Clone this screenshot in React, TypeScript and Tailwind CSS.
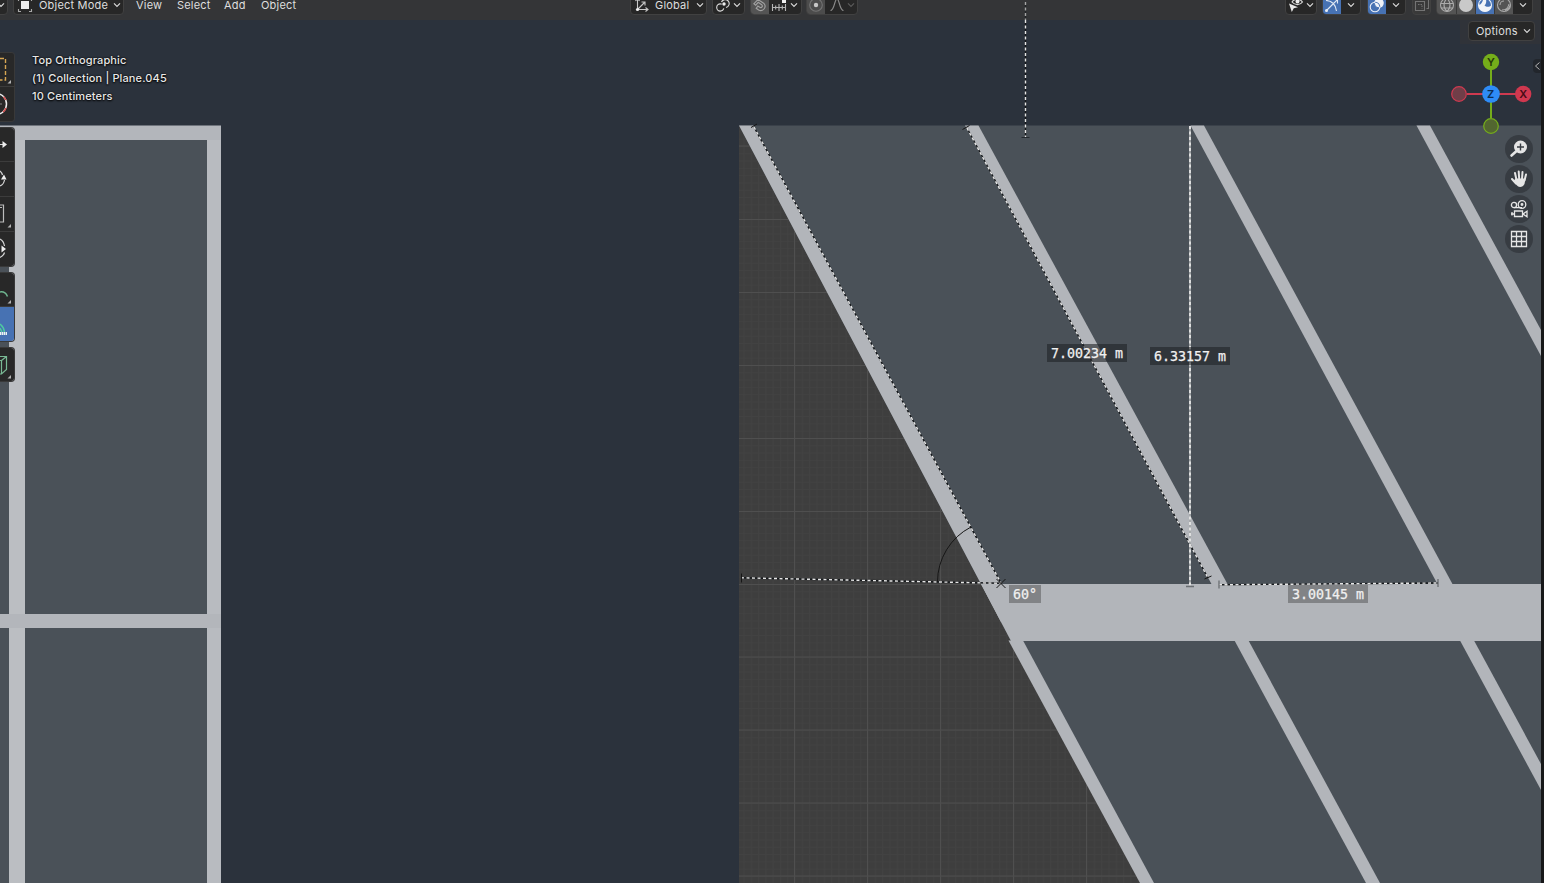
import type { ReactNode } from "react";

const UI = "font-['Inter',sans-serif] text-[11px] tracking-[0.2px] leading-[11px] whitespace-nowrap";

function Chevron({ dim = false }: { dim?: boolean }) {
  return (
    <svg width="8" height="6" viewBox="0 0 8 6" className="shrink-0" fill="none" stroke={dim ? "#5a5a5a" : "#d8d8d8"} strokeWidth="1.2">
      <path d="M1 1.3 4 4.3 7 1.3" />
    </svg>
  );
}

function Button({ className, children }: { className: string; children?: ReactNode }) {
  return (
    <div className={`flex h-5 shrink-0 items-center overflow-hidden rounded-[4px] border border-[#414141] bg-[#272727] ${className}`}>
      {children}
    </div>
  );
}

function Icon({ children, className = "" }: { children: ReactNode; className?: string }) {
  return (
    <svg width="16" height="16" viewBox="0 0 16 16" className={`shrink-0 ${className}`} fill="none" stroke="#dcdcdc" strokeWidth="1.1">
      {children}
    </svg>
  );
}

function Header() {
  return (
    <header className={`flow-root h-5 w-[1541px] bg-[#343537] text-[#dedede] ${UI}`}>
      <div className="-mt-[5px] flex h-5 items-center">
        <Button className="-ml-3 w-[20px] justify-end pr-[2px]"><Chevron /></Button>
        <Button className="ml-[5px] w-[111px] pl-[3px]">
          <Icon>
            <rect x="4" y="4" width="8" height="8" fill="#ececec" stroke="none" />
            <path d="M1.5 4V1.5H4M12 1.5h2.5V4M14.500 12v2.500H12M4 14.500H1.500V12" stroke="#a8a8a8" />
          </Icon>
          <span className="ml-[6px] w-[74px] pt-px">Object Mode</span>
          <Chevron />
        </Button>
        <nav className="flex w-[506px] pl-3 pt-px">
          <span className="w-[41px]">View</span>
          <span className="w-[47px]">Select</span>
          <span className="w-[37px]">Add</span>
          <span>Object</span>
        </nav>
        <Button className="w-[77px] pl-[3px]">
          <Icon>
            <path d="M3.500 2v10.500h10M1.500 4l2-2.500 2 2.500M11.500 10.500l2.500 2-2.500 2M3.500 12.500l7-7M7.500 5h3.500v3.500" stroke="#c8c8c8" />
            <circle cx="3.500" cy="12.500" r="1.600" fill="#eee" stroke="none" />
          </Icon>
          <span className="ml-[5px] w-[41px] pt-px">Global</span>
          <Chevron />
        </Button>
        <Button className="ml-[5px] w-[33px] pl-[2px]">
          <Icon className="mr-[2px]">
            <circle cx="5.300" cy="10.500" r="3.600" strokeDasharray="17 5.600" strokeDashoffset="-1" />
            <path d="M6.500 5A4 4 0 1 1 11 10.500" />
            <circle cx="9" cy="7" r="1.700" fill="#eee" stroke="none" />
          </Icon>
          <Chevron />
        </Button>
        <Button className="ml-[5px] w-[52px]">
          <div className="flex h-full w-[18px] items-center justify-center bg-[#545454]">
            <Icon>
              <path d="M1.800 6.800 6 2.500 12 6.500A4.300 4.300 0 0 1 6.600 13L4.200 11.300 5.900 9l2.300 1.500A1.600 1.600 0 0 0 10 8L6.200 5.300 3.700 8.200z" stroke="#a2a2a2" />
            </Icon>
          </div>
          <Icon className="ml-[2px]">
            <path d="M1 10.500h14M1.500 7v7M4.700 8.500v4M8 7v7M11.300 8.500v4M14.500 7v7" stroke="#b6b6b6" />
            <rect x="11" y="1" width="4" height="5" fill="#f1f1f1" stroke="none" />
          </Icon>
          <span className="ml-[3px] flex"><Chevron /></span>
        </Button>
        <Button className="ml-[4px] w-[52px]">
          <div className="flex h-full w-[18px] items-center justify-center bg-[#4c4c4c]">
            <Icon>
              <circle cx="8" cy="8" r="6.300" stroke="#747474" />
              <circle cx="8" cy="8" r="2.200" fill="#c7c7c7" stroke="none" />
            </Icon>
          </div>
          <Icon className="ml-[4px]">
            <path d="M1.500 13.500c4 0 4-11.500 6.500-11.500s2.500 11.500 6.500 11.500" stroke="#8c8c8c" />
          </Icon>
          <span className="ml-[2px] flex"><Chevron dim /></span>
        </Button>

        <Button className="ml-[427px] w-[32px] pl-[2px]">
          <Icon className="mr-[2px]">
            <path d="M1 6.500l9 3.800-4.200 1-2 3.700z" fill="#e8e8e8" stroke="none" />
            <path d="M4 5C6 1.500 12 1.500 14.500 5 12 8.500 7 8.500 4 5z" />
            <circle cx="9.500" cy="4.500" r="2" fill="#eee" stroke="none" />
          </Icon>
          <Chevron />
        </Button>
        <Button className="ml-[5px] w-[39px]">
          <div className="flex h-full w-[18px] items-center justify-center bg-[#4772b3]">
            <Icon>
              <path d="M2 3.500C8 3.500 12 8 12.500 14M2 14 13 3M9.500 2.500h4v4M8 8 2 14" stroke="#e0e8f3" />
              <circle cx="2.500" cy="13.500" r="1.500" fill="#e8edf5" stroke="none" />
            </Icon>
          </div>
          <span className="ml-[6px] flex"><Chevron /></span>
        </Button>
        <Button className="ml-[6px] w-[39px]">
          <div className="flex h-full w-[18px] items-center justify-center bg-[#4772b3]">
            <Icon>
              <circle cx="10" cy="6" r="4.800" fill="#f0f3f8" stroke="none" />
              <circle cx="6" cy="10" r="4.800" stroke="#e9eef6" />
              <path d="M5.400 6.200A4.800 4.800 0 0 0 10 10.800M6.200 5.200A4.800 4.800 0 0 1 10.800 9.800" stroke="#4772b3" />
            </Icon>
          </div>
          <span className="ml-[6px] flex"><Chevron /></span>
        </Button>
        <div className="ml-[6px] flex h-5 w-[19px] items-center justify-center rounded-[4px] border border-[#414141] bg-[#393939]">
          <Icon>
            <path d="M1.500 4.500h9v9h-9zM4.500 1.500h10v10h-2" stroke="#747474" />
            <path d="M4 7.500h4v4" stroke="#747474" strokeDasharray="1.500 1" />
          </Icon>
        </div>
        <Button className="ml-[5px] w-[97px]">
          <div className="flex h-full w-[19px] items-center justify-center bg-[#545454]">
            <Icon>
              <circle cx="8" cy="8" r="6.500" stroke="#aaa" />
              <path d="M1.500 6.500h13M2.500 11h11M8 1.500C4 5 4 11 8 14.500M8 1.500c4 3.500 4 9.500 0 13" stroke="#aaa" />
            </Icon>
          </div>
          <div className="flex h-full w-[19px] items-center justify-center border-l border-[#393939] bg-[#545454]">
            <Icon><circle cx="8" cy="8" r="7" fill="#c9c9c9" stroke="none" /></Icon>
          </div>
          <div className="flex h-full w-[19px] items-center justify-center border-l border-[#393939] bg-[#4772b3]">
            <Icon>
              <circle cx="8" cy="8" r="6.500" stroke="#edf1f7" />
              <path d="M8.500 1.500C10 4 9 7 7.500 8.500c2 2 5 1.500 7 0A6.500 6.500 0 0 1 2 10.500C1 7 3 3 8.500 1.500z" fill="#f1f4f8" stroke="none" />
              <path d="M2.500 6C3 4.500 4.500 3 6 2.700 5.500 5 4.500 6.500 2.500 8z" fill="#4772b3" stroke="none" />
            </Icon>
          </div>
          <div className="flex h-full w-[19px] items-center justify-center border-l border-[#393939] bg-[#545454]">
            <Icon>
              <circle cx="8" cy="8" r="6.500" stroke="#ababab" />
              <path d="M4 8a4 4 0 0 1 4-4M6 13c4 0 6.500-3 7-6M9 13.500c3-1 4.500-3 5-5" stroke="#ababab" />
            </Icon>
          </div>
          <span className="ml-[6px] flex"><Chevron /></span>
        </Button>
      </div>
    </header>
  );
}

const majorX = [794.5, 867.5, 940.5, 1013.5, 1086.5];
const majorY = [146, 219.5, 292.500, 365.500, 438.500, 511.500, 584.500, 657, 730, 803, 876];

function DashLine({ x1, y1, x2, y2, soft = false }: { x1: number; y1: number; x2: number; y2: number; soft?: boolean }) {
  return (
    <g strokeWidth={soft ? 1.8 : 1.4}>
      <line x1={x1} y1={y1} x2={x2} y2={y2} stroke={soft ? "#a4a7aa" : "#15181b"} />
      <line x1={x1} y1={y1} x2={x2} y2={y2} stroke="#e6e6e6" strokeDasharray="3 2.500" />
    </g>
  );
}

function Scene() {
  return (
    <svg className="absolute inset-0" width="1544" height="883" viewBox="0 0 1544 883">
      <defs>
        <pattern id="minor" x="794.500" y="146" width="7.300" height="7.300" patternUnits="userSpaceOnUse">
          <path d="M0 .500H7.300M.500 0V7.300" stroke="#424242" strokeWidth="1" fill="none" />
        </pattern>
        <clipPath id="ground"><polygon points="739,125.500 1011,641 1142,883 739,883" /></clipPath>
      </defs>
      <rect width="1544" height="883" fill="#2b323c" />
      <rect x="0" y="125.500" width="221" height="757.500" fill="#b3b6bb" />
      <rect x="9" y="140" width="16" height="743" fill="#bbbec2" />
      <rect x="207" y="140" width="14" height="743" fill="#b8bbc0" />
      <g fill="#4a5158">
        <rect x="0" y="140" width="9" height="474" />
        <rect x="0" y="628" width="9" height="255" />
        <rect x="25" y="140" width="182" height="474" />
        <rect x="25" y="628" width="182" height="255" />
      </g>
      <rect x="0" y="614" width="221" height="14" fill="#b3b6bb" />

      <rect x="739" y="125.500" width="802" height="757.500" fill="#4a5158" />
      <g clipPath="url(#ground)" stroke="#4f4f4f" strokeWidth="1">
        <rect x="739" y="125" width="420" height="758" fill="#3e3e3e" stroke="none" />
        <rect x="739" y="125" width="420" height="758" fill="url(#minor)" stroke="none" />
        {majorX.map((x) => <line key={x} x1={x} x2={x} y1="125" y2="883" />)}
        {majorY.map((y) => <line key={y} y1={y} y2={y} x1="739" x2="1150" />)}
      </g>
      <g fill="#b2b5ba">
        <polygon points="739,125.500 753.500,125.500 1001,584 1001,622 1011,641 981,584" />
        <polygon points="965,125.500 978.500,125.500 1228,585 1212,585" />
        <polygon points="1190.500,125.500 1204,125.500 1453,585 1438,585" />
        <polygon points="1416.500,125.500 1430,125.500 1541,330 1541,356" />
        <polygon points="981,584 1541,584 1541,641 1011,641" />
        <polygon points="1008.500,640.500 1023,640.500 1154,883 1140,883" />
        <polygon points="1234.500,640.500 1248.500,640.500 1380,883 1366,883" />
        <polygon points="1460,640.500 1474,640.500 1541,764 1541,790" />
      </g>

      <DashLine x1={1025.500} y1={20} x2={1025.500} y2={137} />
      <path d="M1021.500 137.500h8" stroke="#24292e" />
      <DashLine x1={754} y1={127} x2={1001} y2={583} />
      <DashLine x1={967} y1={128} x2={1208} y2={578} />
      <DashLine x1={741} y1={577.800} x2={1001} y2={583.300} />
      <DashLine x1={1190} y1={126} x2={1190} y2={586} soft />
      <DashLine x1={1219} y1={584.800} x2={1438} y2={583} />
      <g fill="none" stroke="#161616">
        <path d="M937.500 582A62 62 0 0 1 971 527" />
        <path d="M996.500 579l9 9M996.500 588l9-9M741.500 573.500v9M751 127.500l6-3.500M962.500 129.500l7-4M1204.500 579l7-3" />
      </g>
      <g stroke="#6a6e72" strokeWidth="1.300">
        <path d="M1186 586.500h8M1219 580.500v8M1438 579v8" />
      </g>
      <rect x="1541" width="3" height="883" fill="#171819" />
    </svg>
  );
}

function Measure({ className, children }: { className: string; children: string }) {
  return (
    <div className={`absolute flex h-[18px] items-center whitespace-pre pl-[4px] pt-[2px] font-['DejaVu_Sans_Mono',monospace] text-[13.300px] leading-none text-[#f0f0f0] [-webkit-text-stroke:0.25px_#f0f0f0] ${className}`}>
      {children}
    </div>
  );
}

function Corner() {
  return <path d="M11 28V31.500H7.500z" transform="translate(0 -1)" fill="#b4b4b4" stroke="none" />;
}

function Tool({ active = false, h, children }: { active?: boolean; h: string; children: ReactNode }) {
  return (
    <div className={`w-[14px] border-b border-[#3c3c3c] last:border-b-0 ${h} ${active ? "bg-[#4772b3]" : "bg-[#282828]"}`}>
      <svg width="14" height="34" viewBox="0 0 14 34" fill="none" stroke="#d6d6d6" strokeWidth="1.200">{children}</svg>
    </div>
  );
}

function Toolbar() {
  const group = "w-[15px] overflow-hidden rounded-r-[4px] border-y border-r border-[#393939]";
  return (
    <aside className="absolute left-0 top-[52px] flex flex-col gap-[5px]">
      <div className={`${group} h-[70px]`}>
        <Tool h="h-[34px]">
          <path d="M0 5.500h5.500V27H0" stroke="#d7a653" strokeWidth="1.400" strokeDasharray="4 2" />
          <Corner />
        </Tool>
        <Tool h="h-[34px]">
          <path d="M-4 6.500A10.500 10.500 0 0 1-4 27.500" stroke="#eee" strokeWidth="1.500" />
          <path d="M3.500 9.700A10.500 10.500 0 0 1 6 13M6 21a10 10 0 0 1-3 4" stroke="#d54b4b" strokeWidth="1.500" />
          <path d="M0 17h2" stroke="#888" />
        </Tool>
      </div>
      <div className={`${group} h-[140px]`}>
        <Tool h="h-[34px]"><path d="M0 16.500h4" /><path d="M2.500 13v7L7 16.500z" fill="#eee" stroke="none" /></Tool>
        <Tool h="h-[35px]"><path d="M0 9c1 1 2 2 2.500 4M4.500 18c-.5 3-2 5-4.500 6" /><path d="M1 17.500h5.500L4 12.500z" fill="#eee" stroke="none" /></Tool>
        <Tool h="h-[35px]"><path d="M0 8h3.500v17H0M-2 10.500h4" stroke="#bcbcbc" /><Corner /></Tool>
        <Tool h="h-[34px]"><path d="M0 7c2 1 4 4 4.500 7M4.500 20.500c-.5 2-2.500 4-4.500 5" /><path d="M1.500 13.500v7l4.500-3.500z" fill="#eee" stroke="none" /></Tool>
      </div>
      <div className={`${group} h-[70px]`}>
        <Tool h="h-[34px]"><path d="M0 19q5-1 7.500 4.500" stroke="#6fb58f" strokeWidth="1.500" /><Corner /></Tool>
        <Tool h="h-[35px]" active>
          <path d="M0 17q4 3 4.500 8M0 21l2 4" stroke="#4ec9a0" strokeWidth="1.500" />
          <path d="M0 26.500h7" stroke="#edf4f2" strokeWidth="3" strokeDasharray="1.500 .500" />
        </Tool>
      </div>
      <div className={`${group} h-[35px]`}>
        <Tool h="h-[35px]"><path d="M0 8.500h6.500v13L1.500 26H0M1.500 26V12.500H0M1.500 12.500l5-4" stroke="#79b994" /><Corner /></Tool>
      </div>
    </aside>
  );
}

function AxisGizmo() {
  return (
    <svg className="absolute left-[1449px] top-[52px] font-['Inter',sans-serif]" width="86" height="84" viewBox="0 0 86 84">
      <g strokeWidth="2">
        <path d="M42 10v56" stroke="#75ad1b" />
        <path d="M18 42h56" stroke="#cf3a50" />
        <circle cx="10" cy="42" r="7.300" fill="#703e48" stroke="#cf3a50" strokeWidth="1.200" />
        <circle cx="42" cy="74" r="7.300" fill="#526630" stroke="#75ad1b" strokeWidth="1.200" />
      </g>
      <circle cx="42" cy="10" r="8.200" fill="#75ae1a" />
      <circle cx="74.200" cy="42" r="8.200" fill="#d0384f" />
      <circle cx="42" cy="42" r="8.800" fill="#2e8cf7" />
      <g textAnchor="middle" fontSize="11" fontWeight="600">
        <text x="42" y="14" fill="#263a08">Y</text>
        <text x="74.200" y="46" fill="#450b15">X</text>
        <text x="41.500" y="46" fill="#0c2d55">Z</text>
      </g>
    </svg>
  );
}

function NavButton({ children }: { children: ReactNode }) {
  return (
    <div className="flex size-[28px] items-center justify-center rounded-full bg-[#373c42]">
      <svg width="20" height="20" viewBox="0 0 20 20" fill="none" stroke="#e5e5e5" strokeWidth="1.300">{children}</svg>
    </div>
  );
}

function NavButtons() {
  return (
    <div className="absolute left-[1505px] top-[135px] flex flex-col gap-[2px]">
      <NavButton>
        <circle cx="11.500" cy="8" r="6.500" fill="#e5e5e5" stroke="none" />
        <path d="M7 12.500 2.500 16.500" strokeWidth="2.600" strokeLinecap="round" />
        <path d="M11.500 4.500v7M8 8h7" stroke="#373c42" strokeWidth="1.400" />
      </NavButton>
      <NavButton>
        <path d="M7.500 11 6 4M10.200 10 9.700 2.500M13 10l.5-7M15.500 11.500l1.500-6M7 14.500 3 10" strokeWidth="2" strokeLinecap="round" />
        <path d="M6.500 9.500h10L15.500 15q-1.500 3-4.500 3-2 0-3.500-2l-3-4z" fill="#e5e5e5" stroke="none" />
      </NavButton>
      <NavButton>
        <circle cx="5" cy="6" r="2.600" />
        <circle cx="13" cy="5.500" r="3.800" />
        <circle cx="13" cy="5.500" r=".8" fill="#e5e5e5" />
        <path d="M5 8.600h8M5.500 12h8v5.500h-8zM2 15h3M3 13v3.500M14 15l4-2.800v5.600z" />
      </NavButton>
      <NavButton><path d="M2.500 2.500h15v15h-15zM7.500 2.500v15M12.500 2.500v15M2.500 7.500h15M2.500 12.500h15" /></NavButton>
    </div>
  );
}

export default function App() {
  return (
    <main className="relative h-[883px] w-[1544px] overflow-hidden bg-[#2b323c]">
      <Scene />
      <div className="relative">
        <Header />
        <div className="flex justify-end pr-[3px]">
          <div className="flex h-6 w-[81px] bg-[#303339] pl-[8px] pt-px">
            <Button className={`w-[67px] justify-between pl-[7px] pr-[3px] text-[#dedede] ${UI}`}>
              <span className="pt-px">Options</span><Chevron />
            </Button>
          </div>
        </div>
      </div>
      <svg className="absolute left-[1022px] top-0" width="8" height="20" viewBox="0 0 8 20" strokeWidth="1.400">
        <path d="M3.500 2v18" stroke="#222427" />
        <path d="M3.500 2v18" stroke="#a5a5a5" strokeDasharray="3 2.500" />
      </svg>
      <div className="absolute left-[32px] top-[51px] whitespace-nowrap font-['Inter',sans-serif] text-[11px] font-medium leading-[18px] tracking-[0.130px] text-[#e8e8e8] [text-shadow:0_0_2px_#000,0_1px_2px_#000]">
        <p>Top Orthographic</p>
        <p>(1) Collection | Plane.045</p>
        <p>10 Centimeters</p>
      </div>
      <Toolbar />
      <AxisGizmo />
      <NavButtons />
      <div className="absolute left-[1533px] top-[59px] flex h-[14px] w-2 items-center rounded-l-[4px] bg-[#22262c]">
        <svg width="8" height="10" viewBox="0 0 8 10" fill="none" stroke="#b5b5b5"><path d="M6.500 1.500 2.500 5l4 3.500" /></svg>
      </div>
      <Measure className="left-[1047px] top-[344px] w-[80px] bg-[#202326]/60">7.00234 m</Measure>
      <Measure className="left-[1150px] top-[347px] w-[80px] bg-[#202326]/60">6.33157 m</Measure>
      <Measure className="left-[1288px] top-[585px] w-[80px] bg-[#818386]">3.00145 m</Measure>
      <Measure className="left-[1009px] top-[585px] w-[32px] bg-[#818386]">60°</Measure>
    </main>
  );
}
